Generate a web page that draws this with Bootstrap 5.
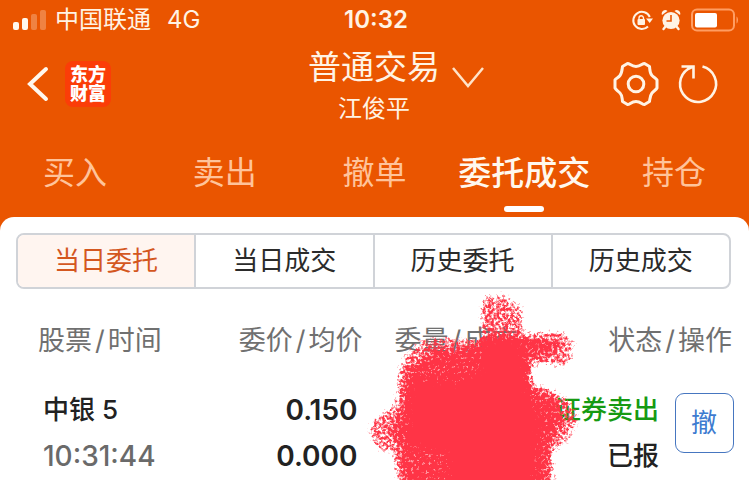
<!DOCTYPE html>
<html lang="zh-CN">
<head>
<meta charset="utf-8">
<meta name="viewport" content="width=device-width, initial-scale=1">
<title>普通交易</title>
<link href="https://cdn.jsdelivr.net/npm/bootstrap@5.3.0/dist/css/bootstrap.min.css" rel="stylesheet">
<style>
  :root { --brand: #ea5500; --cream: #fff3e4; --line: #d0d3d8; }
  body { font-family: Inter, "Noto Sans CJK SC", sans-serif; background: var(--brand); color: #222; }
  svg { display: block; flex: none; }
  .screen { overflow: hidden; min-height: 100vh; }
  .three-part { display: grid; grid-template-columns: 1fr auto 1fr; align-items: center; }
  .status-bar { height: 40px; padding: 0 10px 0 13px; font-size: 24px; line-height: 40px; color: var(--cream); }
  .status-time { font-weight: 600; }
  .title-bar { height: 88px; padding: 0 28px 0 27px; color: var(--cream); }
  .plain-btn { border: 0; background: none; padding: 0; color: inherit; }
  .logo { width: 46px; height: 46px; border-radius: 8px; background: #fb3d08; color: #fff; font-size: 18px; line-height: 19px; font-weight: 900; }
  .account { column-gap: 12px; padding-top: 4px; }
  .account-title { grid-column: 2; font-size: 33px; line-height: 46px; }
  .account-name { grid-column: 2; font-size: 24px; line-height: 38px; }
  .account svg { align-self: end; }
  .main-tabs { height: 89px; }
  .main-tabs .nav-link { padding: 21px 0 4px; font-size: 32px; line-height: 48px; font-weight: 400; color: #ffc39a; }
  .main-tabs .nav-link.active { color: #fff8ee; font-weight: 500; font-size: 33px; }
  .main-tabs .nav-link::after { content: ""; display: block; width: 40px; height: 6px; margin: 9px auto 0; border-radius: 3px; }
  .main-tabs .nav-link.active::after { background: #fff; }
  .panel { border-radius: 14px 14px 0 0; padding: 16px 0 0; min-height: 263px; }
  .segments { margin: 0 18px 0 16px; border: 2px solid var(--line); border-radius: 8px; overflow: hidden; }
  .segments .plain-btn { flex: 1 1 0; font-size: 26px; line-height: 52px; color: #2b2b2b; }
  .segments .plain-btn + .plain-btn { border-left: 2px solid var(--line); }
  .segments .plain-btn.active { background: #fff5f0; color: #d4571f; }
  .orders { table-layout: fixed; }
  .orders th { padding: 32px 0 26px; font-size: 27px; line-height: 40px; font-weight: 400; color: #707070; white-space: nowrap; }
  .orders th span { margin: 0 3px; }
  .orders td { padding: 0; font-size: 26px; line-height: 46px; font-weight: 500; white-space: nowrap; vertical-align: middle; }
  .orders .first-head { padding-left: 38px; }
  .orders .first-cell { padding-left: 43px; }
  .orders .price { padding-right: 5px; font-weight: 600; font-size: 28px; }
  .orders .last-head { padding-right: 17px; }
  .orders .time { color: #6a6a6a; font-size: 28px; }
  .sell { color: #169a12; }
  .cancel-btn { width: 59px; height: 60px; border: 1px solid #4676c0; border-radius: 9px; color: #3d7bd0; font-size: 26px; margin-bottom: 20px; }
  .scribble { position: absolute; left: 49%; top: 74px; pointer-events: none; }
</style>
</head>
<body>
<div class="screen">
  <header>
    <div class="status-bar three-part">
      <div class="d-flex align-items-center">
        <svg width="34" height="22" viewBox="0 0 34 22" aria-hidden="true"><g fill="#fff8ee"><rect y="13" width="6" height="8" rx="2"/><rect x="9" y="9" width="6" height="12" rx="2"/><g opacity=".28"><rect x="18" y="5" width="6" height="16" rx="2"/><rect x="27" y="1" width="6" height="20" rx="2"/></g></g></svg>
        <span class="ms-2">中国联通</span><span class="ms-3">4G</span>
      </div>
      <div class="status-time">10:32</div>
      <div class="d-flex align-items-center justify-content-end">
        <svg width="22" height="22" viewBox="0 0 22 22" fill="none" stroke="#fff3e4" stroke-width="2" aria-hidden="true"><path d="M17 17.5A8.6 8.6 0 1 1 18.8 8"/><path d="M15 9.5h7L18.700 14z" fill="#fff3e4" stroke="none"/><rect x="6.500" y="10" width="7.500" height="6" rx="1" fill="#fff3e4" stroke="none"/><path d="M8 10.500V9a2.200 2.200 0 0 1 4.500 0v1.500" stroke-width="1.400"/></svg>
        <svg class="ms-2" width="20" height="22" viewBox="0 0 20 22" aria-hidden="true"><g fill="#fff3e4"><circle cx="10" cy="11.500" r="8.600"/><path d="M1 6a3.500 3.500 0 0 1 5.500-4zM19 6a3.500 3.500 0 0 0-5.500-4z"/></g><path d="M4.500 17.500L2.500 20M15.500 17.500l2 2.500" stroke="#fff3e4" stroke-width="2.400" stroke-linecap="round"/><path d="M10 6v6H5.500" fill="none" stroke="#ea5500" stroke-width="1.600"/></svg>
        <svg class="ms-2" width="50" height="24" viewBox="0 0 50 24" aria-hidden="true"><rect x="3" y="1.500" width="42" height="21" rx="5" fill="none" stroke="#ff9d62" stroke-width="2"/><rect x="6" y="5" width="22" height="14.500" rx="2" fill="#fff"/><path d="M47.500 8.500c2 1 2 6 0 7z" fill="#ff9d62"/></svg>
      </div>
    </div>
    <div class="title-bar three-part">
      <div class="d-flex align-items-center">
        <button class="plain-btn" aria-label="返回"><svg width="22" height="36" viewBox="0 0 22 36" fill="none" stroke="#fff8ee" stroke-width="4" stroke-linecap="round"><path d="M19 3L3 18l16 15"/></svg></button>
        <div class="logo ms-3 d-flex align-items-center justify-content-center text-center">东方<br>财富</div>
      </div>
      <button class="plain-btn account three-part">
        <span class="account-title">普通交易</span>
        <svg width="32" height="32" viewBox="0 0 32 32" fill="none" stroke="#ffe3c8" stroke-width="2.500"><path d="M1 10l15 18L31 10"/></svg>
        <span class="account-name">江俊平</span>
      </button>
      <div class="d-flex align-items-center justify-content-end">
        <button class="plain-btn" aria-label="设置"><svg width="46" height="46" viewBox="0 0 46 46" fill="none" stroke="#fff3e4" stroke-width="3" stroke-linejoin="round"><path d="M14.500 2.500 C17 2.500 18 5.500 23 5.500 S29 2.500 31.500 2.500 L36.500 5.500 C37 9 36.500 12 39 14.500 S43 17 44 19 V27 C43 29 41 29.500 39 32 S37 37 36.500 40.500 L31.500 43.500 C29 43.500 28 40.500 23 40.500 S17 43.500 14.500 43.500 L9.500 40.500 C9 37 9.500 34.500 7 32 S3 29 2 27 V19 C3 17 5 17 7 14.500 S9 9 9.500 5.500 Z"/><circle cx="23" cy="23" r="7.800"/></svg></button>
        <button class="plain-btn ms-3" aria-label="刷新"><svg width="46" height="46" viewBox="0 0 46 46" fill="none" stroke="#fff3e4" stroke-width="2.600"><path d="M27.500 5.500A18 18 0 1 1 13 8L18 5.500M6.500 5.500h12v12"/></svg></button>
      </div>
    </div>
    <nav class="main-tabs nav nav-justified flex-nowrap">
      <a class="nav-link" href="#">买入</a>
      <a class="nav-link" href="#">卖出</a>
      <a class="nav-link" href="#">撤单</a>
      <a class="nav-link active" href="#" aria-current="page">委托成交</a>
      <a class="nav-link" href="#">持仓</a>
    </nav>
  </header>
  <main class="panel bg-white position-relative">
    <div class="segments d-flex">
      <button class="plain-btn active">当日委托</button>
      <button class="plain-btn">当日成交</button>
      <button class="plain-btn">历史委托</button>
      <button class="plain-btn">历史成交</button>
    </div>
    <table class="orders w-100">
      <colgroup><col style="width:28.7%"><col style="width:19.7%"><col style="width:20.8%"><col style="width:18.8%"><col style="width:12%"></colgroup>
      <thead>
        <tr><th class="first-head" scope="col">股票<span>/</span>时间</th><th class="text-end" scope="col">委价<span>/</span>均价</th><th class="text-end" scope="col">委量<span>/</span>成交</th><th class="last-head text-end" scope="col" colspan="2">状态<span>/</span>操作</th></tr>
      </thead>
      <tbody>
        <tr>
          <td class="first-cell"><div>中银 5</div><div class="time">10:31:44</div></td>
          <td class="price text-end"><div>0.150</div><div>0.000</div></td>
          <td></td>
          <td class="text-end"><div class="sell">证券卖出</div><div>已报</div></td>
          <td class="text-center"><button class="plain-btn cancel-btn">撤</button></td>
        </tr>
      </tbody>
    </table>
    <svg class="scribble" width="216" height="189" viewBox="367 291 216 189" aria-hidden="true">
      <defs>
        <filter id="crayon" filterUnits="userSpaceOnUse" x="360" y="285" width="230" height="210" color-interpolation-filters="sRGB">
          <feGaussianBlur in="SourceAlpha" stdDeviation="3" result="soft"/>
          <feTurbulence type="fractalNoise" baseFrequency=".35" numOctaves="3" seed="8"/>
          <feColorMatrix values="0 0 0 0 0  0 0 0 0 0  0 0 0 0 0  2 0 0 0 -.5" result="grain"/>
          <feComposite in="soft" in2="grain" operator="arithmetic" k2="1.6" k3=".9" k4="-1.1"/>
          <feComponentTransfer result="cut"><feFuncA type="linear" slope="2"/></feComponentTransfer>
          <feFlood flood-color="#ff3446"/>
          <feComposite in2="cut" operator="in"/>
        </filter>
      </defs>
      <g filter="url(#crayon)">
        <path fill-opacity=".6" d="M481 302L488 291L495 299L503 291L512 301L523 306L525 333L562 330L570 338L577 345L570 354L575 361L560 368L545 364L532 367L534 383L548 387L569 398L579 418L573 435L562 448L553 450L556 490H398L394 466L391 451L378 452L368 434L371 420L384 411L395 403L397 372L405 354L419 341L442 336L480 339Z"/>
        <path fill-opacity=".6" d="M484 338L524 338L556 341L560 350L528 360L530 388L555 398L562 420L550 440L545 490H404L400 445L390 430L402 410L408 370L430 352L470 348Z"/>
        <path d="M486 338L518 338L525 365L529 400L540 420L536 455L532 490H452L448 455L412 445L407 415L410 385L440 380L455 384L480 370Z"/>
        <path stroke="#000" stroke-width="5" stroke-opacity=".2" d="M488 300V334"/>
      </g>
    </svg>
  </main>
</div>
<script src="https://cdn.jsdelivr.net/npm/bootstrap@5.3.0/dist/js/bootstrap.bundle.min.js"></script>
</body>
</html>
